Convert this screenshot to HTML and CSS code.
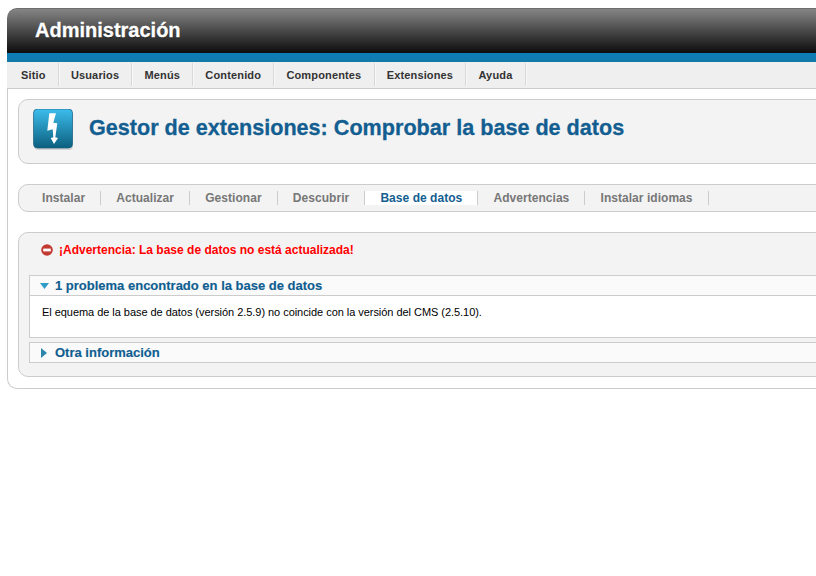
FILE: index.html
```html
<!DOCTYPE html>
<html lang="es">
<head>
<meta charset="utf-8">
<title>Administración</title>
<link rel="stylesheet" href="styles.css">
</head>
<body>
<div class="page">
  <header class="header">
    <h1 class="brand">Administración</h1>
  </header>
  <div class="stripe"></div>
  <nav class="menu">
    <a class="menu-item">Sitio</a>
    <a class="menu-item">Usuarios</a>
    <a class="menu-item">Menús</a>
    <a class="menu-item">Contenido</a>
    <a class="menu-item">Componentes</a>
    <a class="menu-item">Extensiones</a>
    <a class="menu-item">Ayuda</a>
  </nav>
  <main class="content">
    <section class="title-box">
      <svg class="title-icon" width="42" height="42" viewBox="0 0 42 42" aria-hidden="true">
        <defs>
          <linearGradient id="iconbg" x1="0" y1="0" x2="0" y2="1">
            <stop offset="0" stop-color="#3cbdec"/>
            <stop offset="1" stop-color="#0c5f7f"/>
          </linearGradient>
        </defs>
        <rect x="1" y="1.5" width="39" height="39.5" rx="4" fill="#9a9a9a" opacity=".35"/>
        <rect x="0.5" y="0" width="39" height="39" rx="4" fill="url(#iconbg)" stroke="#1b5f7c" stroke-width=".7"/>
        <path d="M16.3 4.3 L23 4.3 L20.3 13.7 L24.3 14.3 L22.3 28.3 L25 29 L21 35 L17.7 29 L20.3 28.3 L19.7 20.3 L14.3 21.7 Z" fill="#fff"/>
      </svg>
      <h2 class="title">Gestor de extensiones: Comprobar la base de datos</h2>
    </section>
    <nav class="submenu">
      <a class="sub-item">Instalar</a>
      <a class="sub-item">Actualizar</a>
      <a class="sub-item">Gestionar</a>
      <a class="sub-item">Descubrir</a>
      <a class="sub-item active">Base de datos</a>
      <a class="sub-item">Advertencias</a>
      <a class="sub-item">Instalar idiomas</a>
    </nav>
    <section class="panel">
      <p class="warning">
        <svg class="warning-icon" width="12" height="12" viewBox="0 0 12 12" aria-hidden="true">
          <circle cx="6" cy="6" r="5.8" fill="#c23a32"/>
          <rect x="2.2" y="4.6" width="7.6" height="2.8" fill="#fff"/>
        </svg>
        ¡Advertencia: La base de datos no está actualizada!
      </p>
      <div class="acc">
        <h3 class="acc-head">
          <svg class="caret-down" width="9" height="6" viewBox="0 0 9 6" aria-hidden="true"><path d="M0 0H9L4.5 6Z" fill="#2f9cc7"/></svg>
          1 problema encontrado en la base de datos
        </h3>
        <div class="acc-body">El equema de la base de datos (versión 2.5.9) no coincide con la versión del CMS (2.5.10).</div>
      </div>
      <div class="acc second">
        <h3 class="acc-head">
          <svg class="caret-right" width="6" height="10" viewBox="0 0 6 10" aria-hidden="true"><path d="M0 0L6 5L0 10Z" fill="#2f86ad"/></svg>
          Otra información
        </h3>
      </div>
    </section>
  </main>
</div>
</body>
</html>
```
FILE: styles.css
```css
html, body { margin: 0; padding: 0; background: #fff; overflow: hidden; height: 576px; }
body { font-family: "Liberation Sans", Arial, sans-serif; }
.page { margin: 8px -30px 0 7px; }
.header {
  height: 44px;
  border-top: 1px solid #6e6e6e;
  border-radius: 10px 0 0 0;
  background: linear-gradient(#858585, #0c0c0c);
  display: flex;
  align-items: center;
}
.brand { margin: 0 0 0 28px; font-size: 20px; line-height: 24px; color: #fff; font-weight: bold; position: relative; top: -1px; -webkit-text-stroke: .3px #fff; text-shadow: 0 1px 1px rgba(0,0,0,.5); }
.stripe { height: 9px; background: linear-gradient(#0c7db8, #147aa8); }
.menu {
  display: flex;
  height: 25px;
  padding: 1px 0 0 2px;
  background: #efefef;
  border-bottom: 1px solid #ccc;
}
.menu-item {
  font-size: 11px;
  font-weight: bold;
  color: #333;
  line-height: 24px;
  height: 23px;
  padding: 0 12.3px 0 12px;
  border-right: 1px solid #d8d8d8;
  box-shadow: 1px 0 0 #f8f8f8;
  letter-spacing: .15px;
}
.content {
  border: 1px solid #ccc;
  border-top: 0;
  border-radius: 0 0 0 10px;
  padding: 10px 0 11px 10px;
  background: #fff;
}
.title-box {
  height: 63px;
  display: flex;
  align-items: flex-start;
  border: 1px solid #ccc;
  border-radius: 10px 0 0 10px;
  background: #f3f3f3;
  padding-left: 14px;
}
.title-icon { flex: none; margin: 9px 14px 0 0; }
.title { margin: 15px 0 0; font-size: 21.6px; line-height: 26px; color: #135e91; font-weight: bold; -webkit-text-stroke: .3px #135e91; }
.submenu {
  margin-top: 20px;
  height: 26px;
  display: flex;
  align-items: center;
  border: 1px solid #ccc;
  border-radius: 10px 0 0 10px;
  background: #f3f3f3;
  padding-left: 8px;
}
.sub-item {
  font-size: 12px;
  font-weight: bold;
  color: #777;
  line-height: 14px;
  padding: 0 15.1px;
  border-right: 1px solid #ccc;
  letter-spacing: .04px;
}
.sub-item.active { background: #fff; color: #135e91; }
.panel {
  margin-top: 20px;
  border: 1px solid #ccc;
  border-radius: 10px 0 0 10px;
  background: #f3f3f3;
  padding: 0 0 13px 10px;
}
.warning {
  margin: 0;
  height: 42px;
  box-sizing: border-box;
  padding: 0 0 8px 12px;
  display: flex;
  align-items: center;
  gap: 6px;
  font-size: 12px;
  font-weight: bold;
  color: #f00;
}
.warning-icon { flex: none; }
.acc { border: 1px solid #ccc; border-right: 0; background: #fff; }
.second { margin-top: 4px; }
.acc-head {
  margin: 0;
  height: 19px;
  display: flex;
  align-items: center;
  padding-left: 10px;
  font-size: 13px;
  line-height: 19px;
  font-weight: bold;
  color: #0f5e91;
  background: #fafafa;
  -webkit-text-stroke: .15px #0f5e91;
}
.caret-down { flex: none; margin-right: 6px; }
.caret-right { flex: none; margin: 0 8px 0 1px; }
.acc-body {
  border-top: 1px solid #ccc;
  height: 41px;
  padding-left: 12px;
  font-size: 11px;
  line-height: 32px;
  color: #000;
  letter-spacing: -.045px;
}
```
